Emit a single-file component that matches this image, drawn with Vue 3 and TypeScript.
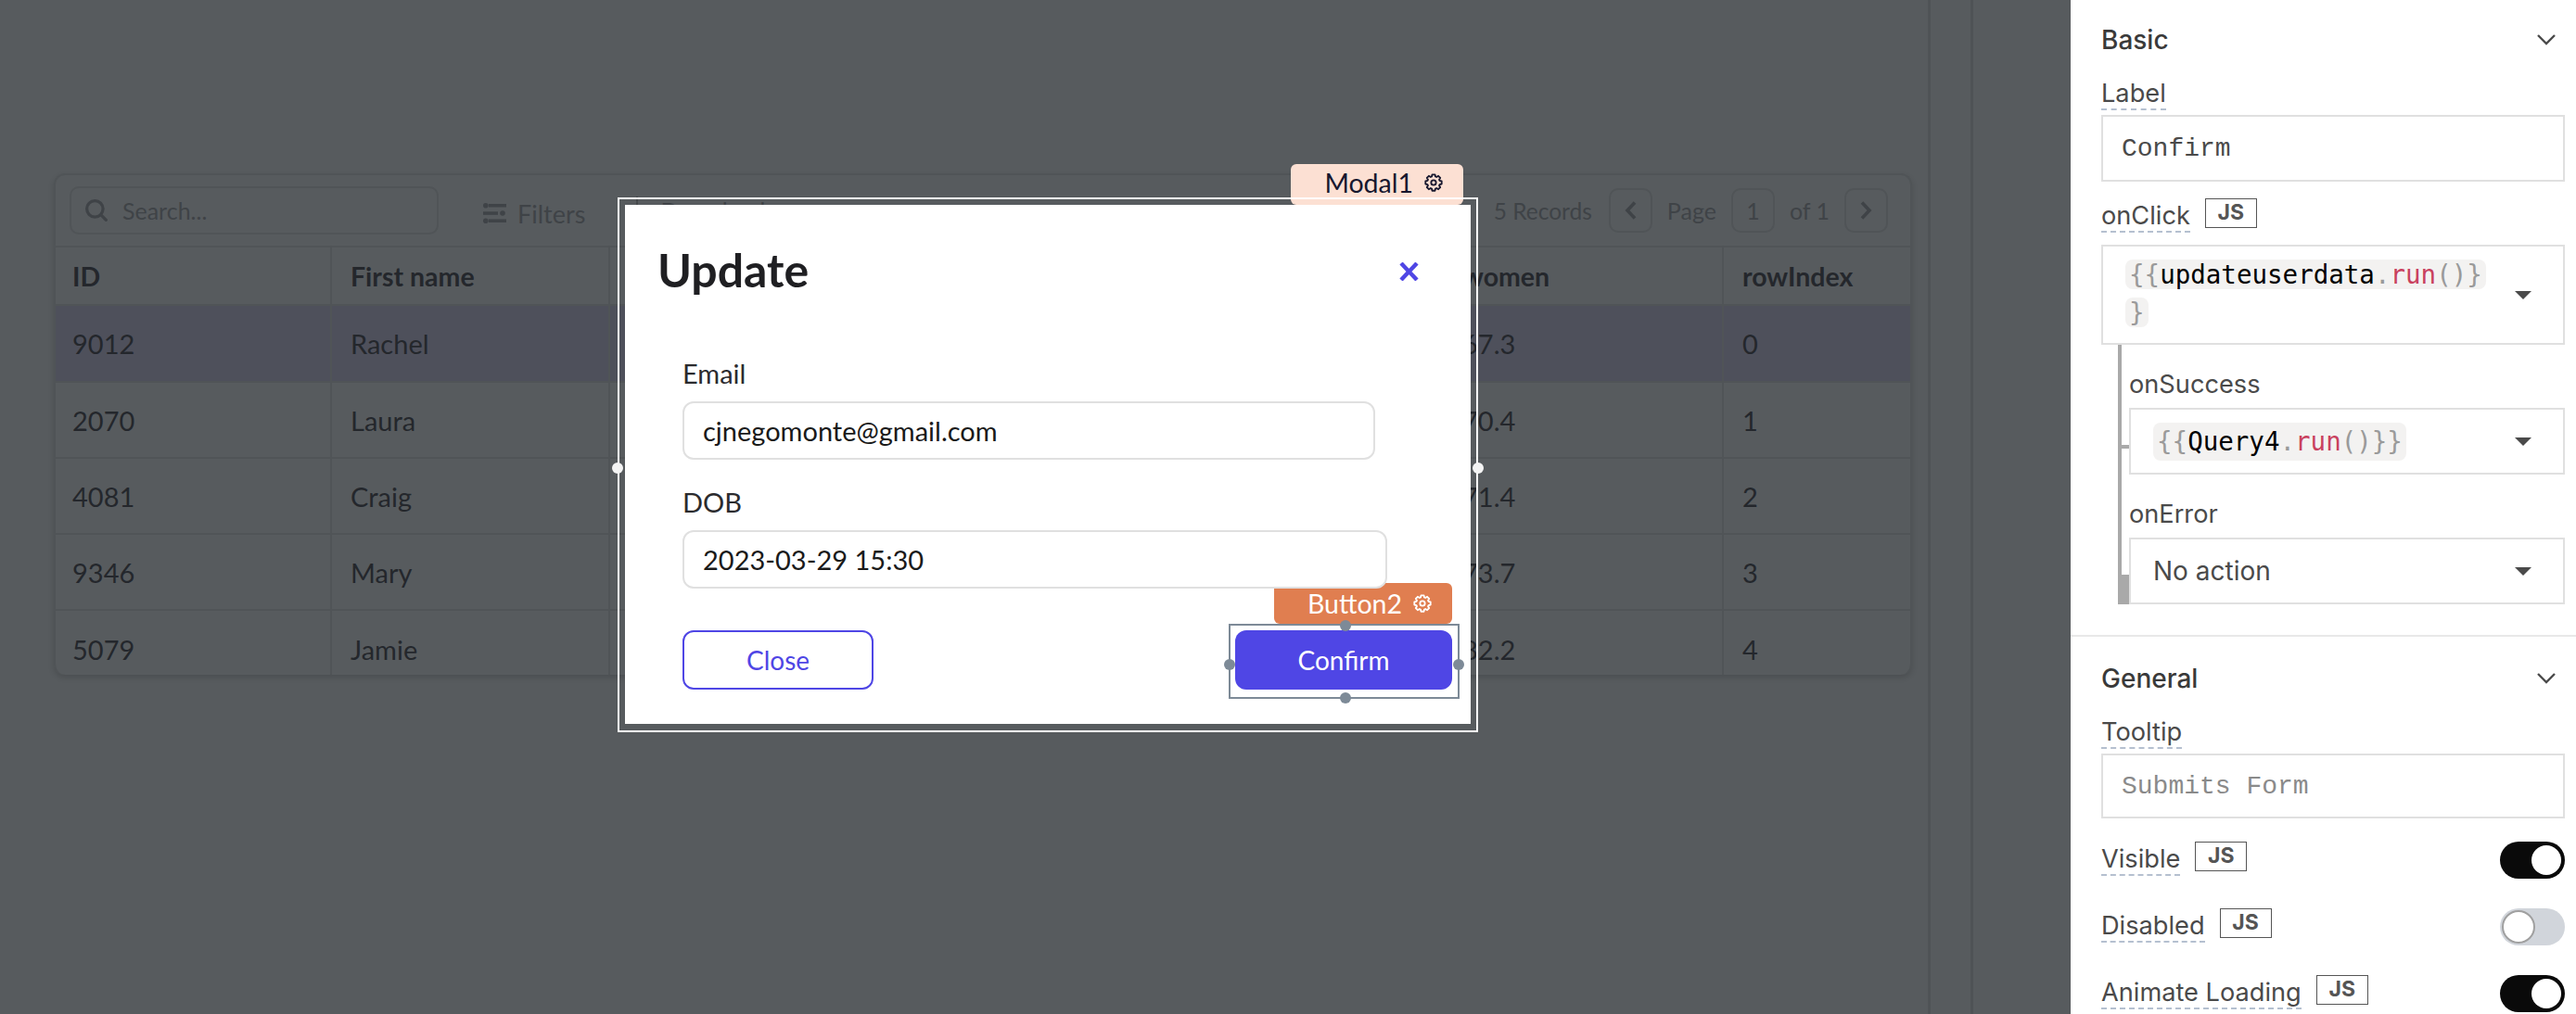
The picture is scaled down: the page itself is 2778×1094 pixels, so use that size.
<script setup lang="ts">
const rows = [
  { id: '9012', name: 'Rachel', pct: '67.3', index: '0' },
  { id: '2070', name: 'Laura', pct: '70.4', index: '1' },
  { id: '4081', name: 'Craig', pct: '71.4', index: '2' },
  { id: '9346', name: 'Mary', pct: '73.7', index: '3' },
  { id: '5079', name: 'Jamie', pct: '82.2', index: '4' },
]

// eight toothed cog outline, used by both selection tags
function cogPath(): string {
  const pts: string[] = []
  for (let t = 0; t < 8; t++) {
    const mid = (t * Math.PI) / 4
    const spots: [number, number][] = [
      [8.2, mid - 0.3],
      [10.6, mid - 0.17],
      [10.6, mid + 0.17],
      [8.2, mid + 0.3],
    ]
    for (const [r, a] of spots) {
      pts.push(`${(12 + r * Math.cos(a)).toFixed(2)} ${(12 + r * Math.sin(a)).toFixed(2)}`)
    }
  }
  return 'M' + pts.join('L') + 'Z'
}

const gearPath = cogPath()
</script>

<template>
  <div class="app">
    <main class="canvas">
      <div class="stripe-one"></div>
      <div class="stripe-two"></div>

      <section class="table-card">
        <div class="toolbar">
          <div class="search">
            <svg class="search-icon" viewBox="1 1 22 22" fill="none" stroke="currentColor" stroke-width="3" stroke-linecap="round">
              <circle cx="10.500" cy="10.500" r="8" />
              <path d="M16.500 16.500l5 5" />
            </svg>
            <span>Search...</span>
          </div>
          <div class="filters">
            <svg class="filter-icon" viewBox="0 0 25 22" fill="currentColor">
              <rect x="6" y="1" width="19" height="3.500" />
              <circle cx="2.800" cy="2.800" r="2.800" />
              <rect x="0" y="9.300" width="16" height="3.500" />
              <circle cx="21" cy="11" r="2.800" />
              <rect x="6" y="17.500" width="19" height="3.500" />
              <circle cx="2.800" cy="19.200" r="2.800" />
            </svg>
            <span>Filters</span>
          </div>
          <div class="download">
            <span class="tool-sep"></span>
            <span>Download</span>
          </div>
          <div class="records">5 Records</div>
          <div class="pager">
            <button class="page-btn">
              <svg viewBox="0 0 13 20" fill="none" stroke="currentColor" stroke-width="3.600"><path d="M11 1.500L3 10l8 8.500" /></svg>
            </button>
            <span>Page</span>
            <span class="page-num">1</span>
            <span>of 1</span>
            <button class="page-btn">
              <svg viewBox="0 0 13 20" fill="none" stroke="currentColor" stroke-width="3.600"><path d="M2 1.500L10 10l-8 8.500" /></svg>
            </button>
          </div>
        </div>
        <div class="thead">
          <div class="cell c-id">ID</div>
          <div class="cell c-name">First name</div>
          <div class="cell c-mid"></div>
          <div class="cell c-pct">women</div>
          <div class="cell c-idx">rowIndex</div>
        </div>
        <div v-for="(row, i) in rows" :key="row.id" class="trow" :class="{ selected: i === 0 }">
          <div class="cell c-id">{{ row.id }}</div>
          <div class="cell c-name">{{ row.name }}</div>
          <div class="cell c-mid"></div>
          <div class="cell c-pct">{{ row.pct }}</div>
          <div class="cell c-idx">{{ row.index }}</div>
        </div>
      </section>

      <!-- selected modal sits over the table -->
      <div class="modal-tag">
        <span>Modal1</span>
        <svg class="gear" viewBox="0 0 24 24" fill="none" stroke="currentColor" stroke-width="2.200" stroke-linejoin="round">
          <path :d="gearPath" />
          <circle cx="12" cy="12" r="3.200" />
        </svg>
      </div>
      <div class="modal-outline">
        <span class="m-handle m-left"></span>
        <span class="m-handle m-right"></span>
      </div>
      <div class="modal">
        <header class="modal-head">
          <h1>Update</h1>
          <svg class="close-x" viewBox="0 0 21 20" fill="none" stroke="currentColor" stroke-width="4.400"><path d="M2 1l17 18M19 1L2 19" /></svg>
        </header>
        <div class="fields">
          <label class="field-label">Email</label>
          <div class="text-input email">cjnegomonte@gmail.com</div>
          <label class="field-label dob-label">DOB</label>
          <div class="text-input dob">2023-03-29 15:30</div>
        </div>
        <div class="actions">
          <button class="btn-close">Close</button>
          <button class="btn-confirm">Confirm</button>
        </div>
      </div>
      <div class="button-tag">
        <span>Button2</span>
        <svg class="gear" viewBox="0 0 24 24" fill="none" stroke="currentColor" stroke-width="2.200" stroke-linejoin="round">
          <path :d="gearPath" />
          <circle cx="12" cy="12" r="3.200" />
        </svg>
      </div>
      <div class="button-outline">
        <span class="b-handle b-top"></span>
        <span class="b-handle b-bottom"></span>
        <span class="b-handle b-left"></span>
        <span class="b-handle b-right"></span>
      </div>
    </main>

    <aside class="panel">
      <section class="group basic">
        <div class="group-head">
          <span>Basic</span>
          <svg class="chev" viewBox="0 0 20 12" fill="none" stroke="currentColor" stroke-width="2.400"><path d="M1 1l9 9 9-9" /></svg>
        </div>
        <div class="prop-label"><span class="dashed">Label</span></div>
        <div class="mono-input">Confirm</div>

        <div class="prop-label onclick">
          <span class="dashed">onClick</span>
          <span class="js">JS</span>
        </div>
        <div class="select tall">
          <div class="code-wrap">
            <span class="code"><i>&#123;&#123;</i>updateuserdata<i>.</i><b>run</b><i>()&#125;</i> <i>&#125;</i></span>
          </div>
          <span class="caret"></span>
        </div>

        <div class="events">
          <div class="event-label">onSuccess</div>
          <div class="select">
            <span class="code"><i>&#123;&#123;</i>Query4<i>.</i><b>run</b><i>()&#125;&#125;</i></span>
            <span class="caret"></span>
          </div>
          <div class="event-label error">onError</div>
          <div class="select">
            <span class="plain">No action</span>
            <span class="caret"></span>
          </div>
          <span class="tick"></span>
          <span class="foot"></span>
        </div>
      </section>

      <section class="group general">
        <div class="group-head">
          <span>General</span>
          <svg class="chev" viewBox="0 0 20 12" fill="none" stroke="currentColor" stroke-width="2.400"><path d="M1 1l9 9 9-9" /></svg>
        </div>
        <div class="prop-label"><span class="dashed">Tooltip</span></div>
        <div class="mono-input muted">Submits Form</div>

        <div class="toggle-row first">
          <span class="dashed">Visible</span>
          <span class="js">JS</span>
          <span class="toggle on"></span>
        </div>
        <div class="toggle-row">
          <span class="dashed">Disabled</span>
          <span class="js">JS</span>
          <span class="toggle"></span>
        </div>
        <div class="toggle-row">
          <span class="dashed">Animate Loading</span>
          <span class="js">JS</span>
          <span class="toggle on"></span>
        </div>
      </section>
    </aside>
  </div>
</template>

<style>
html, body { margin: 0; background: #575b5e; overflow: hidden; }
</style>

<style scoped>
.app { display: flex; width: 2778px; height: 1094px; overflow: hidden; font-family: Lato, "Open Sans", sans-serif; }
.canvas { position: relative; width: 2233px; flex: none; background: #575b5e; padding: 187px 0 0 58px; box-sizing: border-box; color: #24272c; font-size: 29px; }
.stripe-one, .stripe-two { position: absolute; top: 0; bottom: 0; width: 3px; background: #4f5356; }
.stripe-one { left: 2079px; }
.stripe-two { left: 2125px; }

.table-card { width: 2004px; height: 541px; border: 2px solid #505457; border-bottom: 0; border-radius: 12px; box-sizing: border-box; overflow: hidden; box-shadow: 0 3px 6px rgba(0, 0, 0, .14); }
.toolbar { display: flex; align-items: center; height: 78px; padding: 0 24px 0 15px; box-sizing: border-box; border-bottom: 2px solid #505457; color: #3f4347; font-size: 25px; }
.search { display: flex; align-items: center; gap: 16px; width: 398px; height: 52px; border: 2px solid #505457; border-radius: 10px; box-sizing: border-box; padding: 0 15px; }
.search-icon { width: 24px; height: 24px; flex: none; }
.filters { display: flex; align-items: center; gap: 12px; margin: 6px 0 0 48px; font-size: 27px; }
.filter-icon { width: 25px; height: 22px; }
.download { display: flex; align-items: center; gap: 24px; margin-left: 55px; }
.tool-sep { width: 2px; height: 30px; background: #45494c; }
.records { margin-left: auto; font-size: 24.500px; }
.pager { display: flex; align-items: center; gap: 16px; margin-left: 18px; }
.page-btn, .page-num { display: flex; align-items: center; justify-content: center; width: 47px; height: 48px; padding: 0; border: 2px solid #505457; border-radius: 10px; box-sizing: border-box; background: none; color: #3f4347; font: inherit; }
.page-btn svg { width: 13px; height: 20px; }

.thead, .trow { display: flex; border-bottom: 2px solid #505457; box-sizing: border-box; }
.thead { height: 63px; font-weight: 700; font-size: 28.500px; }
.trow { height: 82px; }
.trow.selected { background: #4e505b; height: 83px; }
.trow:last-child { border-bottom: 0; }
.cell { display: flex; align-items: center; height: 100%; padding-left: 20px; box-sizing: border-box; border-right: 2px solid #505457; }
.c-id { width: 298px; padding-left: 18px; }
.c-name { width: 300px; }
.c-mid { width: 900px; }
.c-pct { width: 301px; padding-left: 19px; }
.c-idx { flex: 1; border-right: 0; }

.modal-outline { position: absolute; left: 666px; top: 213px; width: 928px; height: 577px; border: 2px solid #fff; box-sizing: border-box; }
.m-handle { position: absolute; top: 284px; width: 12px; height: 12px; border-radius: 50%; background: #f4f4f4; }
.m-left { left: -8px; }
.m-right { right: -8px; }

.modal-tag { position: absolute; left: 1392px; top: 177px; width: 186px; height: 44px; box-sizing: border-box; display: flex; align-items: center; justify-content: flex-end; gap: 12px; padding: 0 22px 4px 0; background: #fce0d3; border-radius: 6px; color: #17172e; font-size: 28.500px; }
.gear { width: 20px; height: 20px; flex: none; }

.modal { position: absolute; left: 674px; top: 221px; width: 912px; height: 560px; box-sizing: border-box; background: #fff; color: #1f1f22; display: flex; flex-direction: column; }
.modal-head { display: flex; align-items: center; justify-content: space-between; height: 142px; padding: 0 56px 0 35px; flex: none; }
.modal-head h1 { margin: -3px 0 0; font-size: 50px; font-weight: 700; }
.close-x { width: 21px; height: 20px; margin-top: 2px; color: #4f46e5; }
.fields { padding: 0 0 0 62px; }
.field-label { display: block; height: 34px; line-height: 34px; margin-top: 23px; color: #2b2b2e; }
.dob-label { margin-top: 29px; }
.text-input { position: relative; z-index: 2; display: flex; align-items: center; height: 63px; margin-top: 13px; padding-left: 20px; border: 2px solid #e0e0e0; border-radius: 12px; box-sizing: border-box; background: #fff; color: #1a1a1a; }
.email { width: 747px; }
.dob { width: 760px; }
.actions { display: flex; justify-content: space-between; padding: 45px 20px 0 62px; }
.btn-close, .btn-confirm { height: 64px; border-radius: 12px; font: inherit; font-size: 28px; box-sizing: border-box; }
.btn-close { width: 206px; border: 2px solid #4f46e5; background: #fff; color: #4f46e5; }
.btn-confirm { width: 234px; border: 0; background: #4f46e5; color: #fff; }

.button-tag { position: absolute; z-index: 1; left: 1374px; top: 629px; width: 192px; height: 44px; box-sizing: border-box; display: flex; align-items: center; justify-content: flex-end; gap: 12px; padding: 0 22px 0 0; background: #e07e50; border-radius: 6px; color: #fff; font-size: 28.500px; }
.button-outline { position: absolute; z-index: 3; left: 1325px; top: 673px; width: 249px; height: 81px; border: 2px solid #7d8a97; box-sizing: border-box; }
.b-handle { position: absolute; width: 12px; height: 12px; border-radius: 50%; background: #7d8a97; }
.b-top { left: 118px; top: -6px; }
.b-bottom { left: 118px; bottom: -7px; }
.b-left { left: -7px; top: 36px; }
.b-right { right: -7px; top: 36px; }

.panel { flex: 1; background: #fff; height: 1094px; overflow: hidden; font-family: Inter, sans-serif; font-size: 27.200px; color: #4a4a4a; }
.group { padding: 0 12px 0 33px; }
.basic { height: 687px; box-sizing: border-box; padding-top: 24px; border-bottom: 2px solid #e8e8e8; }
.general { padding-top: 26px; }
.group-head { display: flex; align-items: center; justify-content: space-between; height: 38px; font-size: 28px; font-weight: 500; color: #3a3a3a; padding-right: 10px; }
.chev { width: 20px; height: 12px; color: #4a4a4a; }
.prop-label { display: flex; align-items: flex-start; height: 42px; margin-top: 20px; }
.dashed { display: inline-block; line-height: 38px; height: 35px; border-bottom: 2px dashed #b5c0d0; }
.onclick { margin-top: 18px; height: 50px; gap: 16px; }
.js { display: flex; align-items: center; justify-content: center; width: 56px; height: 32px; box-sizing: border-box; border: 1px solid #555; font-size: 23px; font-weight: 700; color: #555; padding-bottom: 3px; }
.mono-input { height: 72px; display: flex; align-items: center; padding-left: 20px; border: 2px solid #e0e0e0; box-sizing: border-box; font-family: "Liberation Mono", monospace; font-size: 28px; color: #4a4a4a; }
.mono-input.muted { color: #8a8a8a; height: 70px; }

.select { position: relative; display: flex; align-items: center; height: 72px; padding-left: 24px; border: 2px solid #e0e0e0; box-sizing: border-box; }
.select.tall { height: 108px; align-items: flex-start; padding-top: 10px; }
.code-wrap { width: 392px; line-height: 41px; }
.code { font-family: "DejaVu Sans Mono", monospace; font-size: 27.500px; line-height: 41px; padding: 0 4px; background: #f3f2f1; color: #000; border-radius: 8px; -webkit-box-decoration-break: clone; box-decoration-break: clone; white-space: normal; word-break: break-all; }
.code i { font-style: normal; color: #9a9a9a; }
.code b { font-weight: 400; color: #c9415e; }
.plain { color: #4a4a4a; font-size: 28px; }
.caret { position: absolute; right: 34px; top: 50%; margin-top: -4px; width: 0; height: 0; border-left: 9px solid transparent; border-right: 9px solid transparent; border-top: 9px solid #4a4a4a; }

.events { position: relative; margin-left: 18px; padding: 25px 0 0 8px; border-left: 4px solid #a9a9a9; height: 280px; box-sizing: border-box; }
.event-label { height: 36px; line-height: 36px; margin-bottom: 7px; }
.event-label.error { margin-top: 25px; }
.tick { position: absolute; left: 0; top: 108px; width: 8px; height: 4px; background: #a9a9a9; }
.foot { position: absolute; left: 0; top: 248px; width: 8px; height: 32px; background: #a9a9a9; }

.toggle-row { display: flex; align-items: flex-start; height: 72px; gap: 16px; }
.toggle-row.first { margin-top: 25px; }
.toggle { margin-left: auto; position: relative; width: 70px; height: 40px; border-radius: 20px; background: #d1d5db; }
.toggle::after { content: ''; position: absolute; left: 2px; top: 2px; width: 32px; height: 32px; border: 2px solid #a0a0a0; border-radius: 50%; background: #fff; }
.toggle.on { background: #0a0a0a; }
.toggle.on::after { left: 34px; top: 4px; width: 32px; height: 32px; border: 0; }
</style>
